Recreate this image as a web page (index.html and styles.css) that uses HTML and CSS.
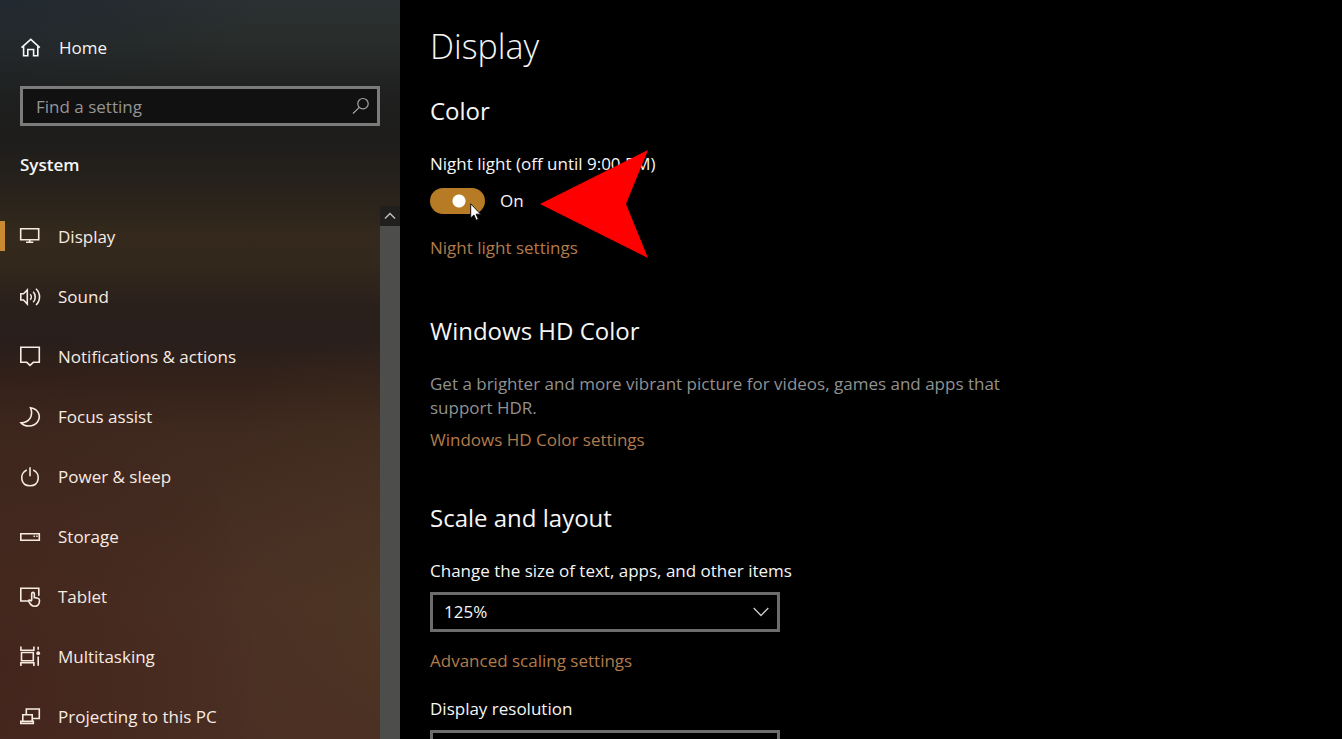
FILE: index.html
```html
<!DOCTYPE html>
<html lang="en">
<head>
<meta charset="utf-8">
<title>Settings</title>
<link rel="stylesheet" href="styles.css">
</head>
<body>
<div class="app">
  <aside class="sidebar">
    <a class="home" href="#home">
      <svg class="icon" viewBox="0 0 20 20"><path d="M1.5 9.7 10.8 1.3l9 8.4M3.6 8.2v9.6h4.2v-6.3h5.8v6.3h4.2V8.2"/></svg>
      <span>Home</span>
    </a>
    <form class="search">
      <input class="search-input" type="text" placeholder="Find a setting" aria-label="Find a setting">
      <button class="search-button" type="button" aria-label="Search">
        <svg class="search-icon" viewBox="0 0 18 18"><circle cx="11" cy="6.7" r="5.2"/><path d="M7.3 10.4 1 16.5"/></svg>
      </button>
    </form>
    <h2 class="category">System</h2>
    <div class="nav-area">
      <nav class="nav">
        <a class="nav-item active" href="#display"><svg class="icon" viewBox="0 0 20 20"><path d="M.7 1.700h18v11h-18zM9.700 12.700v2M6 15.200h7.300"/></svg><span>Display</span></a>
        <a class="nav-item" href="#sound"><svg class="icon" viewBox="0 0 20 20"><path d="M.8 6.7h2.7L7.3 3v14l-3.8-4H.8zM10.2 7.2c1.4 1.4 1.4 4 0 5.5M13.2 4.7c2.7 2.8 2.7 7.8 0 10.5M16 1.8c4.7 4.7 4.7 11.5 0 16.2"/></svg><span>Sound</span></a>
        <a class="nav-item" href="#notifications"><svg class="icon" viewBox="0 0 20 20"><path d="M.8.300h18.500v15h-6L10 18.300l-3.200-3h-6z"/></svg><span>Notifications &amp; actions</span></a>
        <a class="nav-item" href="#focus"><svg class="icon" viewBox="0 0 20 20"><path d="M10.5.8c8.700 1.200 10.700 9.400 6.800 14.400-4.200 5.200-12.500 4.800-16.200.7C9.500 15.500 13.700 8.800 10.500.8z"/></svg><span>Focus assist</span></a>
        <a class="nav-item" href="#power"><svg class="icon" viewBox="0 0 20 20"><path d="M10 .3v9M6.800 3C-1 6.300.3 18.800 10 18.800S21 6.300 13.200 3"/></svg><span>Power &amp; sleep</span></a>
        <a class="nav-item" href="#storage"><svg class="icon" viewBox="0 0 20 20"><path d="M.8 6.700h18.500v6.600H.8z"/><path d="M13.500 9.300h1.500M16.200 9.300h1.500"/></svg><span>Storage</span></a>
        <a class="nav-item" href="#tablet"><svg class="icon" viewBox="0 0 20 20"><path d="M8 14H.8V1.300h18v7.500M11.700 13.500V6.800c0-1.900 2.600-1.900 2.600 0v3.700l3.500.7c1.200.2 1.700.9 1.700 2 0 3.400-1.200 6-4.600 6-3.300 0-4.300-1.400-6-4.600-.7-1.500.7-2.300 2.800-.2"/></svg><span>Tablet</span></a>
        <a class="nav-item" href="#multitasking"><svg class="icon" viewBox="0 0 20 20"><path d="M.9-.500v3.700h13V-.500M1.500 5.500h11.800v8.200H1.500zM.9 19v-3.200h13V19M18.200-.200v2.900M18.200 9.500v9.300"/><circle class="dot" cx="18.200" cy="6.200" r="1.900"/></svg><span>Multitasking</span></a>
        <a class="nav-item" href="#projecting"><svg class="icon" viewBox="0 0 20 20"><path d="M6.300 7V2h13v9.500h-6.500M2.800 7.700h9.400v6.500H2.800zM.8 14.200v2.200h12.500v-2.200z"/></svg><span>Projecting to this PC</span></a>
      </nav>
      <div class="scrollbar">
        <button class="scroll-up" type="button" aria-label="Scroll up"><svg class="scroll-icon" viewBox="0 0 12 8"><path d="M1 6.500 6 1.500l5 5"/></svg></button>
        <div class="scroll-thumb"></div>
      </div>
    </div>
  </aside>

  <main class="content">
    <h1 class="page-title">Display</h1>

    <section class="section">
      <h2 class="section-title">Color</h2>
      <div class="night-light">
        <label class="label" for="night-light">Night light (off until 9:00 PM)</label>
        <div class="toggle-row">
          <input class="toggle" id="night-light" type="checkbox" role="switch" checked>
          <span>On</span>
        </div>
        <svg class="pointer-arrow" viewBox="0 0 108 108" aria-hidden="true"><path d="M0 54 108 0 86 54l22 54z"/></svg>
        <svg class="cursor" viewBox="0 0 12 18" aria-hidden="true"><path d="M.7.800v14.200l3.200-3 2.300 5.200 2.200-1-2.300-5h4.600z"/></svg>
      </div>
      <a class="link night-link" href="#night-light-settings">Night light settings</a>
    </section>

    <section class="section hd-section">
      <h2 class="section-title">Windows HD Color</h2>
      <p class="description">Get a brighter and more vibrant picture for videos, games and apps that support HDR.</p>
      <a class="link" href="#hd-color">Windows HD Color settings</a>
    </section>

    <section class="section scale-section">
      <h2 class="section-title">Scale and layout</h2>
      <label class="label" for="scale">Change the size of text, apps, and other items</label>
      <div class="select-wrap">
        <select class="select" id="scale"><option>125%</option></select>
        <svg class="chevron" viewBox="0 0 16 10" aria-hidden="true"><path d="m.7 1 7.300 7.500L15.300 1"/></svg>
      </div>
      <a class="link scaling-link" href="#scaling">Advanced scaling settings</a>
      <label class="label resolution-label" for="resolution">Display resolution</label>
      <div class="select-wrap">
        <select class="select" id="resolution"></select>
        <svg class="chevron" viewBox="0 0 16 10" aria-hidden="true"><path d="m.7 1 7.300 7.500L15.300 1"/></svg>
      </div>
    </section>
  </main>
</div>
</body>
</html>
```

FILE: styles.css
```css
* { box-sizing: border-box; }

body {
  margin: 0;
  background: #000;
  color: #f5f5f5;
  font-family: "Open Sans", "Noto Sans", sans-serif;
  font-size: 17px;
  line-height: 24px;
}

h1, h2, p { margin: 0; font-weight: 400; }
a { color: inherit; text-decoration: none; }
button { padding: 0; border: 0; background: none; color: inherit; }
input, select { font: inherit; }

svg {
  display: block;
  flex: none;
  fill: none;
  stroke: currentColor;
}

.app {
  display: flex;
  height: 100vh;
  overflow: hidden;
}

/* Sidebar */
.sidebar {
  display: flex;
  flex: none;
  flex-direction: column;
  width: 400px;
  padding-top: 32px;
  background:
    radial-gradient(ellipse 260px 110px at 0 0, rgba(20, 28, 45, 0.4), transparent),
    radial-gradient(ellipse 260px 360px at 0 90%, rgba(50, 14, 14, 0.3), transparent),
    radial-gradient(ellipse 200px 300px at 100% 80%, rgba(90, 75, 40, 0.2), transparent),
    linear-gradient(#2a3132 0, #292d2b 40px, #1e1f1e 100px, #1e1d1c 140px, #27221b 190px, #34291c 235px, #33281c 265px, #2a201b 305px, #281e1b 340px, #33221a 380px, #3f291f 430px, #452d22 520px, #4a3023 600px, #4a2e23 100%);
}

.home {
  display: flex;
  align-items: center;
  gap: 19px;
  padding: 4px 20px;
}

.icon {
  width: 20px;
  height: 20px;
  stroke-width: 1.6;
  overflow: visible;
}

.icon .dot { fill: currentColor; stroke: none; }

.search {
  display: flex;
  align-items: center;
  height: 40px;
  margin: 22px 20px 0;
  border: 3px solid #7b7b7b;
  background: #111;
}

.search-input {
  flex: 1;
  min-width: 0;
  padding: 1px 13px 0;
  border: 0;
  outline: 0;
  background: none;
  color: #fff;
}

.search-input::placeholder { color: #959595; opacity: 1; }
.search-button { padding: 0 7px; color: #a5a5a5; }
.search-icon { width: 18px; height: 18px; stroke-width: 1.2; }

.category {
  margin: 27px 20px 0;
  font-size: 17px;
  font-weight: 600;
}

.nav-area {
  display: flex;
  flex: 1;
  min-height: 0;
  margin-top: 29px;
}

.nav { flex: 1; overflow: hidden; }

.nav-item {
  display: flex;
  align-items: center;
  gap: 18px;
  height: 60px;
  padding: 2px 20px 0;
  color: #f7ebe2;
}

.nav-item.active {
  background: linear-gradient(#c98a32, #c98a32) left center / 5px 30px no-repeat;
}

.scrollbar {
  display: flex;
  flex-direction: column;
  width: 20px;
}

.scroll-up {
  display: grid;
  place-items: center;
  height: 20px;
  background: #201f1d;
  color: #bbb;
}

.scroll-icon { width: 12px; height: 8px; stroke-width: 1.5; }
.scroll-thumb { flex: 1; background: #4d4d4b; }

/* Content */
.content {
  flex: 1;
  min-width: 0;
  padding: 22px 30px 0;
  overflow: hidden;
}

.page-title {
  font-size: 34px;
  font-weight: 300;
  line-height: 48px;
}

.section { margin-top: 25px; }
.hd-section { margin-top: 55px; }
.scale-section { margin-top: 50px; }

.section-title {
  margin-bottom: 25px;
  font-size: 24px;
  line-height: 32px;
}

.label, .link { display: block; width: fit-content; }
.link { color: #b27b4b; }
.night-link { margin-top: 22px; }

.night-light { position: relative; width: fit-content; }

.toggle-row {
  display: flex;
  align-items: center;
  gap: 15px;
  margin-top: 12px;
  height: 26px;
}

.toggle {
  appearance: none;
  width: 55px;
  height: 26px;
  margin: 0;
  border-radius: 13px;
  background: radial-gradient(circle at 29px 13px, #fff 6px, #b77b25 7px);
}

.pointer-arrow {
  position: absolute;
  top: -2px;
  left: 110px;
  width: 108px;
  height: 108px;
  fill: #f00;
  stroke: none;
}

.cursor {
  position: absolute;
  top: 51px;
  left: 40px;
  width: 12px;
  height: 18px;
  fill: #fff;
  stroke: #111;
}

.description {
  max-width: 570px;
  margin-bottom: 8px;
  color: #919191;
}

.select-wrap {
  position: relative;
  width: 350px;
  max-width: 100%;
  margin-top: 9px;
}

.select {
  appearance: none;
  display: block;
  width: 100%;
  height: 40px;
  padding: 0 40px 0 11px;
  border: 3px solid #6c6c6c;
  border-radius: 0;
  background: #000;
  color: #f5f5f5;
}

.chevron {
  position: absolute;
  top: 15px;
  right: 11px;
  width: 16px;
  height: 10px;
  color: #ccc;
  stroke-width: 1.3;
  pointer-events: none;
}

.scaling-link { margin-top: 17px; }
.resolution-label { margin-top: 24px; }
```
